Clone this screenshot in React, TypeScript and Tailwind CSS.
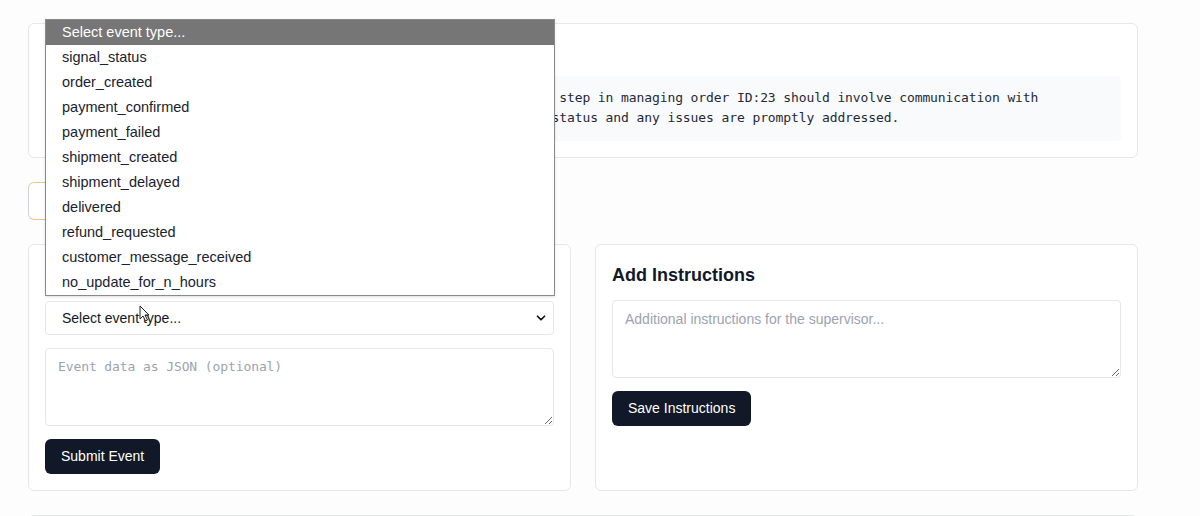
import { ChevronDown } from 'lucide-react';

const eventTypes = [
  'signal_status',
  'order_created',
  'payment_confirmed',
  'payment_failed',
  'shipment_created',
  'shipment_delayed',
  'delivered',
  'refund_requested',
  'customer_message_received',
  'no_update_for_n_hours',
];

const recommendation =
  'Order is pending and is awaiting shipment confirmation. The next step in managing order ID:23 should involve communication with\n' +
  'the customer to keep them updated about the delay and the order status and any issues are promptly addressed.';

function EventDropdown() {
  return (
    <div className="absolute left-[45px] top-[19px] z-20 w-[510px] border border-[#8a8a8a] bg-white shadow-sm">
      <div className="flex h-[25px] items-center bg-[#767676] px-4 text-[14.5px] text-white">
        Select event type...
      </div>
      {eventTypes.map((t) => (
        <div key={t} className="flex h-[25px] items-center px-4 text-[14.5px] text-[#1a2230]">
          {t}
        </div>
      ))}
    </div>
  );
}

function Cursor() {
  return (
    <svg
      className="absolute left-[139px] top-[305px] z-30"
      width="11"
      height="17"
      viewBox="0 0 11 17"
    >
      <path d="M1 1 L1 14 L4 11 L6.5 16 L8.5 15 L6 10 L10 10 Z" fill="white" stroke="#222" strokeWidth="1" />
    </svg>
  );
}

export default function App() {
  return (
    <div className="relative h-[516px] overflow-hidden bg-[#fdfdfd] font-['Liberation_Sans',Arial,sans-serif] text-[#111827]">
      <EventDropdown />
      <Cursor />

      <div className="flex w-[1110px] flex-col gap-6 pl-7 pt-[23px] box-content">
        {/* Supervisor recommendation */}
        <div className="rounded-md border border-[#e5e7eb] bg-white p-4">
          <h2 className="mb-2 text-[18px] font-bold leading-7">Supervisor Recommendation</h2>
          <pre className="whitespace-pre-wrap rounded bg-[#f9fafb] px-3 pt-3 pb-[13px] font-['DejaVu_Sans_Mono',monospace] text-[13px] leading-5 tracking-[-0.1px] text-[#1f2937]">
            {recommendation}
          </pre>
        </div>

        {/* status banner */}
        <div className="flex h-[38px] w-[420px] items-center rounded-md border border-[#edc47e] border-l-[#cfd3d8] bg-white px-4 text-[14px]">
          Status: awaiting_event
        </div>

        <div className="grid grid-cols-2 gap-6">
          <div className="rounded-md border border-[#e5e7eb] bg-white p-4">
            <h2 className="mb-3 text-[18px] font-bold leading-7">Send Event</h2>
            <div className="relative">
              <select className="h-[34px] w-full appearance-none rounded border border-[#e5e7eb] bg-white px-4 text-[14px] text-[#111827]">
                <option>Select event type...</option>
                {eventTypes.map((t) => (
                  <option key={t}>{t}</option>
                ))}
              </select>
              <ChevronDown
                className="pointer-events-none absolute right-[6px] top-[10px] text-[#111]"
                size={14}
                strokeWidth={3}
              />
            </div>
            <textarea
              className="mt-[13px] block h-[78px] w-full rounded border border-[#e5e7eb] bg-white px-3 py-2 font-['DejaVu_Sans_Mono',monospace] text-[13px] tracking-[-0.1px] placeholder:text-[#9ca3af]"
              placeholder="Event data as JSON (optional)"
            />
            <button className="mt-[13px] h-[35px] rounded-md bg-[#111827] px-4 text-[14px] text-white">
              Submit Event
            </button>
          </div>

          <div className="rounded-md border border-[#e5e7eb] bg-white p-4">
            <h2 className="mb-[11px] text-[18px] font-bold leading-7">Add Instructions</h2>
            <textarea
              className="block h-[78px] w-full rounded border border-[#e5e7eb] bg-white px-3 py-2 text-[14px] placeholder:text-[#9ca3af]"
              placeholder="Additional instructions for the supervisor..."
            />
            <button className="mt-[13px] h-[35px] rounded-md bg-[#111827] px-4 text-[14px] text-white">
              Save Instructions
            </button>
          </div>
        </div>

        <div className="h-[40px] rounded-md border border-[#e5e7eb] bg-white" />
      </div>
    </div>
  );
}
